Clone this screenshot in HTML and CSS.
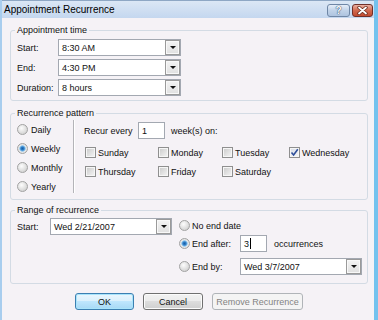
FILE: index.html
```html
<!DOCTYPE html>
<html>
<head>
    <title>Appointment Recurrence</title>
    <link rel="stylesheet" href="styles.css">
</head>
<body>
    <div class="window">
        <div class="titlebar">
            <span class="title">Appointment Recurrence</span>
            <div class="caption-buttons">
                <span class="cap-btn help">?</span>
                <span class="cap-btn close">
                    <svg width="11" height="9" viewBox="0 0 11 9">
                        <path d="M2 1.5 L9 7.5 M9 1.5 L2 7.5" stroke="#6b2b1e" stroke-width="3.4" stroke-linecap="round"/>
                        <path d="M2 1.5 L9 7.5 M9 1.5 L2 7.5" stroke="#fff" stroke-width="1.8" stroke-linecap="round"/>
                    </svg>
                </span>
            </div>
        </div>

        <div class="client">
            <fieldset class="group time-group">
                <legend>Appointment time</legend>
                <div class="field-row">
                    <span class="field-label">Start:</span>
                    <div class="combo"><span class="combo-text">8:30 AM</span><span class="drop"></span></div>
                </div>
                <div class="field-row">
                    <span class="field-label">End:</span>
                    <div class="combo"><span class="combo-text">4:30 PM</span><span class="drop"></span></div>
                </div>
                <div class="field-row">
                    <span class="field-label">Duration:</span>
                    <div class="combo"><span class="combo-text">8 hours</span><span class="drop"></span></div>
                </div>
            </fieldset>

            <fieldset class="group pattern-group">
                <legend>Recurrence pattern</legend>
                <div class="pattern">
                    <div class="freq">
                        <div class="radio-row"><span class="radio"></span>Daily</div>
                        <div class="radio-row"><span class="radio checked"></span>Weekly</div>
                        <div class="radio-row"><span class="radio"></span>Monthly</div>
                        <div class="radio-row"><span class="radio"></span>Yearly</div>
                    </div>
                    <div class="divider"></div>
                    <div class="weekly">
                        <div class="recur-row">
                            <span class="recur-label">Recur every</span>
                            <span class="textbox">1</span>
                            <span class="recur-unit">week(s) on:</span>
                        </div>
                        <div class="days">
                            <div class="check-row"><span class="check"></span>Sunday</div>
                            <div class="check-row"><span class="check"></span>Monday</div>
                            <div class="check-row"><span class="check"></span>Tuesday</div>
                            <div class="check-row">
                                <span class="check checked">
                                    <svg width="9" height="9" viewBox="0 0 9 9">
                                        <path d="M1.5 4.5 L3.6 7 L7.8 1.3" fill="none" stroke="#2f4f9a" stroke-width="1.6"/>
                                    </svg>
                                </span>Wednesday
                            </div>
                            <div class="check-row"><span class="check"></span>Thursday</div>
                            <div class="check-row"><span class="check"></span>Friday</div>
                            <div class="check-row"><span class="check"></span>Saturday</div>
                        </div>
                    </div>
                </div>
            </fieldset>

            <fieldset class="group range-group">
                <legend>Range of recurrence</legend>
                <div class="range">
                    <div class="range-start">
                        <span class="range-label">Start:</span>
                        <div class="combo start-combo"><span class="combo-text">Wed 2/21/2007</span><span class="drop"></span></div>
                    </div>
                    <div class="range-end">
                        <div class="end-row"><span class="radio"></span>No end date</div>
                        <div class="end-row after-row">
                            <span class="radio checked"></span>
                            <span class="end-label">End after:</span>
                            <span class="textbox">3<span class="caret"></span></span>
                            <span class="end-unit">occurrences</span>
                        </div>
                        <div class="end-row by-row">
                            <span class="radio"></span>
                            <span class="end-label">End by:</span>
                            <div class="combo by-combo"><span class="combo-text">Wed 3/7/2007</span><span class="drop"></span></div>
                        </div>
                    </div>
                </div>
            </fieldset>

            <div class="buttons">
                <span class="btn default">OK</span>
                <span class="btn cancel">Cancel</span>
                <span class="btn disabled">Remove Recurrence</span>
            </div>
        </div>
    </div>
</body>
</html>
```

FILE: styles.css
```css
body {
    margin: 0;
    font-family: "Liberation Sans", Arial, sans-serif;
    font-size: 9px;
    color: #111;
    background: #f5f2f6;
}
.window {
    width: 378px;
    height: 320px;
    box-sizing: border-box;
    border-left: 2px solid #a8cdee;
    border-right: 4px solid #74c2ee;
    background: #f5f2f6;
    overflow: hidden;
}

/* title bar */
.titlebar {
    height: 18px;
    box-sizing: border-box;
    border-top: 1px solid #8ea7c4;
    background: linear-gradient(#dbe7f5, #c4d7ef);
    display: flex;
    align-items: flex-start;
    justify-content: space-between;
}
.title {
    font-size: 10px;
    line-height: 17px;
    padding-left: 2px;
    color: #000;
}
.caption-buttons {
    display: flex;
    gap: 2px;
    margin-top: 3px;
    margin-right: 1px;
}
.cap-btn {
    height: 13px;
    box-sizing: border-box;
    border-radius: 3px;
    display: flex;
    align-items: center;
    justify-content: center;
}
.help {
    width: 23px;
    border: 1px solid #6f87a6;
    background: linear-gradient(#e6eef8, #c0d2e8 50%, #aec4df);
    color: #fff;
    font-weight: bold;
    font-size: 10px;
    text-shadow: 0 0 1px #1f3a5c, 0 0 1px #1f3a5c;
}
.close {
    width: 21px;
    border: 1px solid #70302a;
    background: linear-gradient(#eab0a2, #d16a50 50%, #c24a2f);
}

/* content */
.client {
    padding: 0 6px 0 8px;
}
.group {
    margin: 6px 0 0;
    padding: 3px 6px 4px;
    border: 1px solid #d3dbe4;
    border-radius: 3px;
    min-width: 0;
}
.group legend {
    padding: 0 2px;
    margin-left: -2px;
    line-height: 12px;
}
.field-row {
    display: flex;
    align-items: center;
    height: 17px;
}
.field-row + .field-row {
    margin-top: 3px;
}
.field-label {
    width: 41px;
}
.combo {
    width: 123px;
    height: 17px;
    box-sizing: border-box;
    border: 1px solid #a3a8b1;
    background: #fff;
    display: flex;
    align-items: center;
}
.combo-text {
    flex: 1;
    padding-left: 3px;
}
.drop {
    width: 15px;
    height: 15px;
    box-sizing: border-box;
    border: 1px solid #9a9a9a;
    background: linear-gradient(#f3f3f3, #e0e0e0);
    box-shadow: inset 0 0 0 1px #f8f8f8;
    display: flex;
    align-items: center;
    justify-content: center;
}
.drop::after {
    content: "";
    border-left: 3px solid transparent;
    border-right: 3px solid transparent;
    border-top: 3px solid #111;
}
.textbox {
    width: 27px;
    height: 17px;
    box-sizing: border-box;
    border: 1px solid #a3a8b1;
    background: #fff;
    padding-left: 3px;
    display: flex;
    align-items: center;
}
.caret {
    width: 1px;
    height: 11px;
    background: #000;
    margin-left: 1px;
}

/* radios and checks */
.radio {
    width: 11px;
    height: 11px;
    box-sizing: border-box;
    border-radius: 50%;
    border: 1px solid #a2a2a2;
    background: radial-gradient(circle at 40% 35%, #fdfdfd, #d4d4d4 75%);
    flex: none;
}
.radio.checked {
    background: radial-gradient(circle, #1a5ea6 0, #2f7fc8 1.6px, #8cc4ee 2.8px, #e9e9e9 3.6px, #d0d0d0);
}
.check {
    width: 11px;
    height: 11px;
    box-sizing: border-box;
    border: 1px solid #8f8f8f;
    background: linear-gradient(135deg, #c9c9c9, #f6f6f6);
    box-shadow: inset 0 0 0 1px #f6f6f6;
    margin-right: 2px;
    display: flex;
    align-items: center;
    justify-content: center;
    flex: none;
}
.check.checked {
    background: linear-gradient(135deg, #d7dde8, #f8f8f8);
}

/* recurrence pattern */
.pattern-group {
    padding-top: 1px;
    padding-bottom: 3px;
}
.pattern {
    display: flex;
    align-items: flex-start;
}
.freq {
    width: 56px;
}
.radio-row {
    height: 19px;
    display: flex;
    align-items: center;
    gap: 3px;
}
.divider {
    width: 1px;
    height: 73px;
    background: #b4b4b8;
    box-shadow: 1px 0 #fff;
}
.weekly {
    padding-left: 10px;
}
.recur-row {
    margin-top: 2px;
    height: 17px;
    display: flex;
    align-items: center;
}
.recur-label {
    width: 54px;
}
.recur-unit {
    margin-left: 6px;
}
.days {
    margin-top: 4px;
    margin-left: 1px;
    display: grid;
    grid-template-columns: 73px 64px 67px auto;
    grid-auto-rows: 19px;
}
.check-row {
    display: flex;
    align-items: center;
}

/* range of recurrence */
.range-group {
    margin-top: 4px;
    padding-top: 1px;
    padding-bottom: 8px;
}
.range {
    display: flex;
    align-items: flex-start;
}
.range-start {
    margin-top: 1px;
    height: 17px;
    display: flex;
    align-items: center;
}
.range-label {
    width: 33px;
}
.start-combo {
    width: 122px;
}
.range-end {
    margin-left: 7px;
}
.end-row {
    height: 17px;
    display: flex;
    align-items: center;
}
.end-row .radio {
    margin-right: 2px;
}
.after-row {
    margin-top: 1px;
}
.by-row {
    margin-top: 6px;
}
.end-label {
    width: 48px;
}
.end-unit {
    margin-left: 7px;
}
.by-combo {
    width: 122px;
}

/* dialog buttons */
.buttons {
    margin-top: 9px;
    display: flex;
    justify-content: center;
    gap: 9px;
}
.btn {
    height: 17px;
    box-sizing: border-box;
    border-radius: 3px;
    display: flex;
    align-items: center;
    justify-content: center;
}
.default {
    width: 59px;
    border: 1px solid #3c7fb1;
    background: linear-gradient(#eaf6fd, #d9f0fc 50%, #bee6fd 50%, #a7d9f5);
    box-shadow: inset 0 0 0 1px #a9e4fb;
}
.cancel {
    width: 60px;
    border: 1px solid #707070;
    background: linear-gradient(#f2f2f2, #ebebeb 50%, #dddddd 50%, #cfcfcf);
    box-shadow: inset 0 0 0 1px #fbfbfb;
}
.disabled {
    width: 91px;
    border: 1px solid #b0b4b8;
    background: #f4f4f4;
    color: #838383;
}
```
